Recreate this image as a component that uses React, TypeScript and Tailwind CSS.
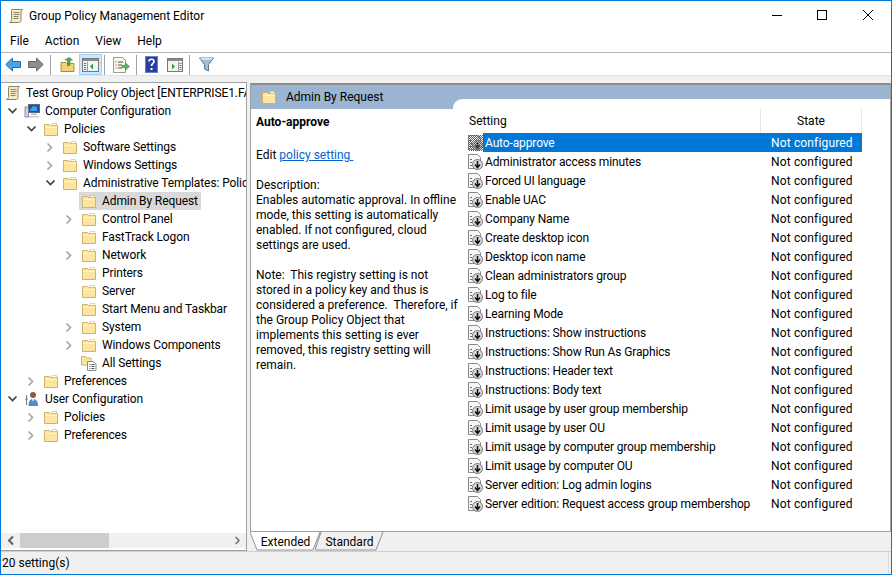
import { ChevronRight } from "lucide-react";

type TreeItem = {
  label: string;
  level: number;
  open?: boolean;
  leaf?: boolean;
  icon?: "scroll" | "computer" | "user" | "folder" | "all";
  selected?: boolean;
};

const tree: TreeItem[] = [
  { label: "Test Group Policy Object [ENTERPRISE1.FASTTRACK.LOCAL] Policy", level: 0, icon: "scroll", leaf: true },
  { label: "Computer Configuration", level: 1, open: true, icon: "computer" },
  { label: "Policies", level: 2, open: true },
  { label: "Software Settings", level: 3 },
  { label: "Windows Settings", level: 3 },
  { label: "Administrative Templates: Policy definitions", level: 3, open: true },
  { label: "Admin By Request", level: 4, leaf: true, selected: true },
  { label: "Control Panel", level: 4 },
  { label: "FastTrack Logon", level: 4, leaf: true },
  { label: "Network", level: 4 },
  { label: "Printers", level: 4, leaf: true },
  { label: "Server", level: 4, leaf: true },
  { label: "Start Menu and Taskbar", level: 4, leaf: true },
  { label: "System", level: 4 },
  { label: "Windows Components", level: 4 },
  { label: "All Settings", level: 4, leaf: true, icon: "all" },
  { label: "Preferences", level: 2 },
  { label: "User Configuration", level: 1, open: true, icon: "user" },
  { label: "Policies", level: 2 },
  { label: "Preferences", level: 2 },
];

const settings = [
  "Auto-approve",
  "Administrator access minutes",
  "Forced UI language",
  "Enable UAC",
  "Company Name",
  "Create desktop icon",
  "Desktop icon name",
  "Clean administrators group",
  "Log to file",
  "Learning Mode",
  "Instructions: Show instructions",
  "Instructions: Show Run As Graphics",
  "Instructions: Header text",
  "Instructions: Body text",
  "Limit usage by user group membership",
  "Limit usage by user OU",
  "Limit usage by computer group membership",
  "Limit usage by computer OU",
  "Server edition: Log admin logins",
  "Server edition: Request access group membershop",
];

function FolderIcon() {
  return (
    <svg width="16" height="16" viewBox="0 0 16 16" className="shrink-0">
      <path d="M1.5 3.5h5l1 1h7v10h-13z" fill="#fbe5a0" stroke="#cdb36f" />
      <path d="M2 6.500h12" stroke="#fff3c9" />
      <path d="M9 2.500h4.500v2H9z" fill="#fff" stroke="#cdb36f" strokeWidth="0.6" />
    </svg>
  );
}

function ScrollIcon() {
  return (
    <svg width="16" height="16" viewBox="0 0 16 16" className="shrink-0">
      <path d="M4 1.500h10.500c-1 1-1.500 2-1.500 3.500v7.500c0 1.500-1 2-2 2H1.500c1-.5 2-1.500 2-3V3c0-1 0-1.500.5-1.500z" fill="#f5ebc8" stroke="#8d8465" />
      <path d="M5.500 4.500h6M5.500 6.500h6M5.500 8.500h5M5.500 10.500h5" stroke="#8d8465" />
    </svg>
  );
}

function ComputerIcon() {
  return (
    <svg width="16" height="16" viewBox="0 0 16 16" className="shrink-0">
      <rect x="4.500" y="1.500" width="11" height="8" fill="#1d4fa8" stroke="#5a6a80" />
      <path d="M6 7l3-4 4 1v4H6z" fill="#3fa0ea" />
      <path d="M7 10.500h6V12H7z" fill="#b7bcc4" />
      <rect x="1" y="4" width="3.500" height="10" fill="#d2d6dc" stroke="#5a6a80" strokeWidth="0.7" />
      <path d="M5 13h10v1.500H5z" fill="#c6cbd2" />
    </svg>
  );
}

function UserIcon() {
  return (
    <svg width="16" height="16" viewBox="0 0 16 16" className="shrink-0">
      <circle cx="9" cy="4" r="3" fill="#8a5b3c" />
      <path d="M4.500 15c0-5 1.500-7 4.500-7s5 2 5 7z" fill="#4f8dc9" />
      <path d="M8 8l1 3 1-3z" fill="#fff" />
      <path d="M2.500 4v10M1 8h3" stroke="#7d8794" strokeWidth="1.2" />
    </svg>
  );
}

function AllSettingsIcon() {
  return (
    <svg width="16" height="16" viewBox="0 0 16 16" className="shrink-0">
      <path d="M.5 1.500h4L5.500 3H10v7H.5z" fill="#fbe5a0" stroke="#cdb36f" />
      <path d="M6.500 6.500h6L15 9v6.500H6.500z" fill="#fff" stroke="#8b8f94" />
      <path d="M8.500 9.500h1M10.500 9.500h3M8.500 11.500h1M10.500 11.500h3M8.500 13.500h1M10.500 13.500h3" stroke="#55595e" />
    </svg>
  );
}

function SettingIcon({ selected }: { selected?: boolean }) {
  return (
    <svg width="15" height="16" viewBox="0 0 15 16" className="shrink-0">
      <path d="M.5.500h9l3 3v11H.5z" fill="#f7f7f7" stroke="#8a8a8a" />
      <path d="M3 5v1M3 8v1M3 11v1" stroke="#222" strokeWidth="1.3" />
      <circle cx="9.500" cy="10.500" r="5" fill="#d8d8d8" stroke="#777" />
      <path d="M9.500 7v6M7 10.500l2.500 3 2.500-3" stroke="#111" strokeWidth="1.5" fill="none" />
      <defs>
        <pattern id="sel-dots" width="2" height="2" patternUnits="userSpaceOnUse">
          <rect width="1" height="1" fill="#0078d7" />
          <rect x="1" y="1" width="1" height="1" fill="#0078d7" />
        </pattern>
      </defs>
      {selected && <rect x="0" y="0" width="15" height="16" fill="url(#sel-dots)" />}
    </svg>
  );
}

function TreeChevron({ open }: { open?: boolean }) {
  if (open) {
    return (
      <svg width="11" height="8" viewBox="0 0 11 8">
        <path d="M1.500 1.500l4 4 4-4" fill="none" stroke="#404040" strokeWidth="1.7" />
      </svg>
    );
  }
  return (
    <svg width="8" height="11" viewBox="0 0 8 11">
      <path d="M1.500 1.500l4 4-4 4" fill="none" stroke="#a6a6a6" strokeWidth="1.7" />
    </svg>
  );
}

function TreeRow({ item }: { item: TreeItem }) {
  return (
    <div className="flex h-[18px] items-center whitespace-nowrap" style={{ paddingLeft: item.level === 0 ? 4 : 5 + (item.level - 1) * 19 }}>
      {item.level > 0 && (
        <span className="mr-[6px] flex w-[12px] shrink-0 justify-center">
          {!item.leaf && <TreeChevron open={item.open} />}
        </span>
      )}
      <div className={item.selected ? "-ml-[2px] flex h-[18px] items-center bg-[#d9d9d9] pl-[2px] pr-[3px]" : "flex h-[18px] items-center"}>
        {item.icon === "scroll" && <ScrollIcon />}
        {item.icon === "computer" && <ComputerIcon />}
        {item.icon === "user" && <UserIcon />}
        {item.icon === "all" && <AllSettingsIcon />}
        {!item.icon && <FolderIcon />}
        <span className="ml-[5px] tracking-[-0.1px]">{item.label}</span>
      </div>
    </div>
  );
}

function ToolbarSep({ className }: { className: string }) {
  return <div className={`h-[20px] w-px bg-[#a0a0a0] ${className}`} />;
}

function Toolbar() {
  return (
    <div className="flex h-[23px] shrink-0 items-center border-b border-[#e3e3e3] pl-[4px] pt-px">
      <svg width="16" height="15" viewBox="0 0 16 15">
        <path d="M.8 7.500L7.500 1v3.500h8v6h-8V14z" fill="#46a4e8" stroke="#1c6fb5" />
      </svg>
      <svg width="16" height="15" viewBox="0 0 16 15" className="ml-[7px]">
        <path d="M15.200 7.500L8.500 1v3.500h-8v6h8V14z" fill="#8c8c8c" stroke="#6a6a6a" />
      </svg>
      <ToolbarSep className="ml-[6px]" />
      <svg width="15" height="16" viewBox="0 0 15 16" className="ml-[9px]">
        <path d="M1 5.500h5l1 1h7v8H1z" fill="#f4d27a" stroke="#b08d3a" />
        <path d="M7.500 9V3H5L9 .5 12.500 3H10v5z" fill="#4fb04a" stroke="#2f7d2b" strokeWidth="0.6" />
      </svg>
      <div className="ml-[4px] flex h-[21px] w-[23px] items-center justify-center border border-[#99d1ff] bg-[#cce8ff]">
        <svg width="17" height="14" viewBox="0 0 17 14">
          <rect x=".5" y=".5" width="16" height="13" fill="#f4f4f4" stroke="#7a7a7a" />
          <rect x="1" y="1" width="15" height="2" fill="#8a8a8a" />
          <path d="M1 4h4v9H1z" fill="#e8eef5" />
          <path d="M2 5.500h2M2 7.500h2M2 9.500h2M2 11.500h2" stroke="#3f7fb5" />
          <path d="M11 5.500v6l-3-3z" fill="#2f9d4a" />
          <path d="M5.500 3.500v10" stroke="#9a9a9a" />
        </svg>
      </div>
      <ToolbarSep className="ml-[2px]" />
      <svg width="17" height="16" viewBox="0 0 17 16" className="ml-[8px]">
        <path d="M.5.500h9l3 3v12H.5z" fill="#fbf7ea" stroke="#9a9a9a" />
        <path d="M2.500 5h1M5 5h5M2.500 8h1M5 8h4M2.500 11h1M5 11h4" stroke="#555" />
        <path d="M9 8.500h3.500V6l4 3.500-4 3.500v-2.500H9z" fill="#5cb85c" stroke="#3a8a3a" strokeWidth="0.6" />
      </svg>
      <ToolbarSep className="ml-[6px]" />
      <svg width="13" height="17" viewBox="0 0 13 17" className="ml-[8px]">
        <rect width="13" height="17" fill="#2b3fa0" />
        <rect x=".5" y=".5" width="12" height="16" fill="none" stroke="#6d80cf" />
        <path d="M4 5.500c0-3 5-3 5 0 0 2-2.500 2-2.500 4.500" fill="none" stroke="#fff" strokeWidth="1.7" />
        <rect x="5.500" y="12" width="2" height="2" fill="#fff" />
      </svg>
      <svg width="16" height="14" viewBox="0 0 16 14" className="ml-[9px]">
        <rect x=".5" y=".5" width="15" height="13" fill="#f4f4f4" stroke="#7a7a7a" />
        <rect x="1" y="1" width="14" height="2" fill="#8a8a8a" />
        <path d="M11.500 3.500v10" stroke="#9a9a9a" />
        <path d="M12.500 5.500h2M12.500 7.500h2M12.500 9.500h2M12.500 11.500h2" stroke="#3f7fb5" />
        <path d="M5 5.500v6l3-3z" fill="#2f9d4a" />
      </svg>
      <ToolbarSep className="ml-[6px]" />
      <svg width="15" height="15" viewBox="0 0 15 15" className="ml-[9px]">
        <path d="M.5 1h14L9.500 7.500V14l-4-2V7.500z" fill="#9fc0d8" stroke="#5b7486" />
        <ellipse cx="7.500" cy="1.800" rx="6.500" ry="1" fill="#d7e6f0" />
      </svg>
    </div>
  );
}

export default function App() {
  return (
    <div className="flex h-[575px] w-[892px] flex-col overflow-hidden border border-[#0078d7] bg-white font-['Roboto','Noto_Sans',sans-serif] text-[12px] leading-[16px] text-black">
      <div className="flex h-[29px] shrink-0 items-center pl-[7px]">
        <ScrollIcon />
        <span className="ml-[5px] flex-1">Group Policy Management Editor</span>
        <svg width="101" height="12" viewBox="0 0 101 12" className="mb-[2px] mr-[18px]">
          <path d="M0 6.500h10" stroke="#000" />
          <rect x="45.500" y="1.500" width="9" height="9" fill="none" stroke="#000" />
          <path d="M91 1l10 10M101 1L91 11" stroke="#000" />
        </svg>
      </div>
      <div className="flex h-[23px] shrink-0 items-center gap-[16px] border-b border-[#b5b5b5] pl-[9px]">
        <span>File</span>
        <span>Action</span>
        <span>View</span>
        <span>Help</span>
      </div>
      <Toolbar />
      <div className="flex min-h-0 flex-1 flex-col bg-[#f0f0f0] pt-[6px]">
        <div className="flex min-h-0 flex-1 gap-[3px]">
          <div className="flex w-[246px] shrink-0 flex-col border-b border-r border-t border-[#a0a0a0] bg-white">
            <div className="min-h-0 flex-1 overflow-hidden pt-px">
              {tree.map((item, i) => (
                <TreeRow key={i} item={item} />
              ))}
            </div>
            <div className="mb-[2px] flex h-[15px] shrink-0 items-center bg-[#f0f0f0]">
              <ChevronLeftGlyph />
              <div className="mr-auto h-[15px] w-[89px] bg-[#cdcdcd]" />
              <ChevronRight size={13} strokeWidth={2} className="mr-[2px] text-[#606060]" />
            </div>
          </div>
          <div className="flex min-w-0 flex-1 flex-col">
            <div className="mt-px flex min-h-0 flex-1 border-b border-l border-r border-t-2 border-[#a0a0a0] border-t-[#8c8c8c] bg-white">
              <div className="flex w-[202px] shrink-0 flex-col">
                <div className="flex h-[24px] shrink-0 items-center bg-[#9bb4d1] pl-[10px]">
                  <FolderIcon />
                  <span className="ml-[9px]">Admin By Request</span>
                </div>
                <div className="relative z-10 whitespace-nowrap pl-[5px] pt-[6px] leading-[15px]">
                  <p className="font-bold">Auto-approve</p>
                  <p className="mt-[18px]">
                    Edit <span className="text-[#0066cc] underline">policy setting&nbsp;</span>
                  </p>
                  <p className="mt-[15px]">Description:</p>
                  <p>
                    Enables automatic approval. In offline<br />
                    mode, this setting is automatically<br />
                    enabled. If not configured, cloud<br />
                    settings are used.
                  </p>
                  <p className="mt-[15px]">
                    Note:&nbsp; This registry setting is not<br />
                    stored in a policy key and thus is<br />
                    considered a preference.&nbsp; Therefore, if<br />
                    the Group Policy Object that<br />
                    implements this setting is ever<br />
                    removed, this registry setting will<br />
                    remain.
                  </p>
                </div>
              </div>
              <div className="min-w-0 flex-1 bg-[#9bb4d1] pt-[14px]">
                <div className="h-full rounded-tl-[9px] bg-white pl-[15px] pt-[10px]">
                  <div className="flex h-[24px]">
                    <span className="flex w-[293px] shrink-0 items-end border-r border-[#e5e5e5] pb-[4px] pl-px">Setting</span>
                    <span className="flex w-[101px] items-end justify-center border-r border-[#e5e5e5] pb-[4px]">State</span>
                  </div>
                  {settings.map((name, i) => (
                    <div key={name} className="flex h-[19px] w-[394px] items-center whitespace-nowrap">
                      <SettingIcon selected={i === 0} />
                      <div className={i === 0 ? "flex h-[19px] flex-1 items-center bg-[#0078d7] text-white" : "flex h-[19px] flex-1 items-center"}>
                        <span className="ml-[2px] w-[276px] shrink-0 tracking-[-0.13px]">{name}</span>
                        <span className="ml-[10px] tracking-[0.15px]">Not configured</span>
                      </div>
                    </div>
                  ))}
                </div>
              </div>
            </div>
            <div className="flex h-[19px] shrink-0">
              <div className="relative flex w-[71px] items-center justify-center">
                <svg width="71" height="19" viewBox="0 0 71 19" className="absolute inset-0">
                  <path d="M0 0l7 18h56l7-18" fill="#fff" stroke="#909090" />
                </svg>
                <span className="relative">Extended</span>
              </div>
              <div className="relative -ml-[6px] flex w-[69px] items-center justify-center">
                <svg width="69" height="19" viewBox="0 0 69 19" className="absolute inset-0">
                  <path d="M6 0L0 18h61l7-18" fill="#f0f0f0" stroke="#909090" />
                </svg>
                <span className="relative">Standard</span>
              </div>
            </div>
          </div>
        </div>
        <div className="flex h-[23px] shrink-0 items-center justify-between border-t border-[#d0d0d0] pl-[1px]">
          <span>20 setting(s)</span>
          <div className="mr-[2px] h-[21px] w-px bg-[#dadada]" />
        </div>
      </div>
    </div>
  );
}

function ChevronLeftGlyph() {
  return (
    <svg width="19" height="13" viewBox="0 0 19 13" className="shrink-0">
      <path d="M12 2.500l-4 4 4 4" fill="none" stroke="#606060" strokeWidth="2" />
    </svg>
  );
}
